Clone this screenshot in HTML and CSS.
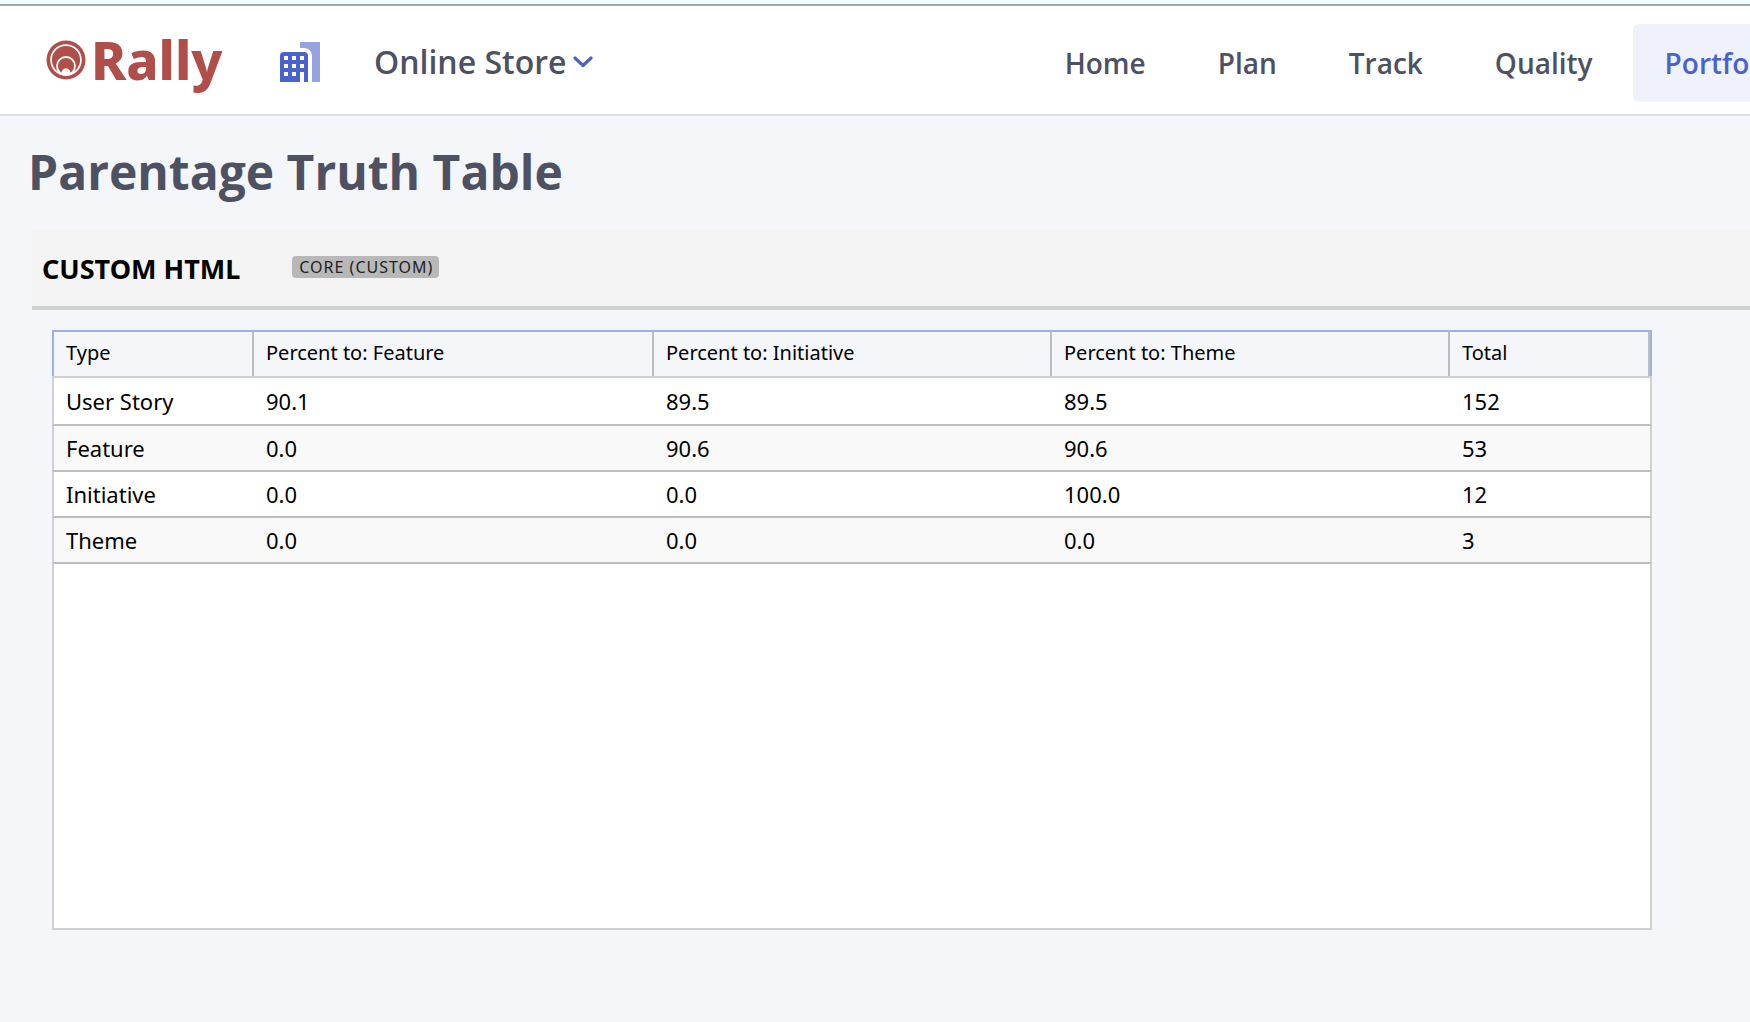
FILE: index.html
```html
<!DOCTYPE html>
<html lang="en">
<head>
<meta charset="utf-8">
<title>Parentage Truth Table</title>
<link rel="stylesheet" href="styles.css">
</head>
<body>
<header class="topbar">
  <a class="logo" href="#" aria-label="Rally">
    <svg class="logo-mark" viewBox="0 0 40 40" aria-hidden="true">
      <circle cx="20" cy="20" r="19.5" fill="#b04e49"/>
      <circle cx="20" cy="20" r="14.9" fill="none" stroke="#fff" stroke-width="1.7"/>
      <circle cx="20" cy="26" r="9" fill="#b04e49" stroke="#fff" stroke-width="1.8"/>
      <path d="M15.600 33.700a4.500 4.500 0 1 1 8.800 0a15 15 0 0 1-8.800 0z" fill="#fff"/>
    </svg>
    <span class="logo-text">Rally</span>
  </a>
  <svg class="building" viewBox="0 0 40 40" aria-hidden="true">
    <path d="M20 0h20v40h-8V14a8 8 0 0 0-8-8h-4z" fill="#96a3df"/>
    <path fill-rule="evenodd" d="M4 10h20a4 4 0 0 1 4 4v26h-4V30h-4v10H0V14a4 4 0 0 1 4-4zM4 14v4h4v-4zM12 14v4h4v-4zM20 14v4h4v-4zM4 22v4h4v-4zM12 22v4h4v-4zM20 22v4h4v-4zM4 30v4h4v-4zM12 30v4h4v-4z" fill="#4a62cb"/>
  </svg>
  <button class="project" type="button">Online Store
    <svg class="chevron" viewBox="0 0 20 12" aria-hidden="true"><path d="M2 2l8 7.500L18 2" fill="none" stroke="#4a62cb" stroke-width="3.200" stroke-linecap="round" stroke-linejoin="round"/></svg>
  </button>
  <nav class="nav">
    <a href="#">Home</a>
    <a href="#">Plan</a>
    <a href="#">Track</a>
    <a href="#">Quality</a>
    <a class="active" href="#">Portfolio</a>
  </nav>
</header>
<main class="page">
  <h1>Parentage Truth Table</h1>
  <section class="panel">
    <div class="panel-head">
      <h2>CUSTOM HTML</h2>
      <span class="badge">CORE (CUSTOM)</span>
    </div>
    <div class="grid">
      <table>
        <colgroup><col class="edge"><col class="feature"><col><col><col class="edge"></colgroup>
        <thead>
          <tr><th>Type</th><th>Percent to: Feature</th><th>Percent to: Initiative</th><th>Percent to: Theme</th><th>Total</th></tr>
        </thead>
        <tbody>
          <tr><td>User Story</td><td>90.1</td><td>89.5</td><td>89.5</td><td>152</td></tr>
          <tr><td>Feature</td><td>0.0</td><td>90.6</td><td>90.6</td><td>53</td></tr>
          <tr><td>Initiative</td><td>0.0</td><td>0.0</td><td>100.0</td><td>12</td></tr>
          <tr><td>Theme</td><td>0.0</td><td>0.0</td><td>0.0</td><td>3</td></tr>
        </tbody>
      </table>
      <div class="grid-empty"></div>
    </div>
  </section>
</main>
</body>
</html>
```
FILE: styles.css
```css
* { box-sizing: border-box; }

body {
  margin: 0;
  min-height: 100vh;
  overflow-x: hidden;
  background: #f4f6fa;
  border-top: 4px solid #f0ffff;
  font-family: "Noto Sans", sans-serif;
  color: #000;
}

.topbar {
  display: flex;
  align-items: center;
  height: 112px;
  padding: 4px 0 0 46px;
  overflow: hidden;
  background: #fff;
  border-top: 2px solid #a0a5a8;
  border-bottom: 2px solid #dcdde9;
}

.logo {
  display: flex;
  align-items: flex-start;
  gap: 5px;
  width: 234px;
  height: 44px;
  color: #b04e49;
  text-decoration: none;
}

.logo-mark { width: 40px; height: 40px; }

.logo-text {
  font-size: 53px;
  font-weight: 800;
  line-height: 40px;
}

.building { width: 40px; height: 40px; flex: none; }

.project {
  display: flex;
  align-items: center;
  gap: 7px;
  margin-left: 54px;
  padding: 0;
  border: 0;
  background: none;
  color: #4d5162;
  font: 600 32px/44px "Open Sans", sans-serif;
  white-space: nowrap;
}

.chevron { width: 20px; height: 12px; }

.nav {
  display: flex;
  gap: 8px;
  margin: 2px -64px 0 auto;
}

.nav a {
  padding: 20px 32px;
  border-radius: 6px;
  color: #4d5162;
  font-family: "Open Sans", sans-serif;
  font-size: 28px;
  font-weight: 600;
  line-height: 38px;
  text-decoration: none;
}

.nav .active { background: #eff2fb; color: #4a62cb; }

h1 {
  margin: 0;
  padding: 24px 28px 26px;
  color: #4d5162;
  font-family: "Open Sans", sans-serif;
  font-size: 48px;
  font-weight: 700;
  line-height: 64px;
}

.panel { margin-left: 32px; }

.panel-head {
  display: flex;
  align-items: flex-start;
  gap: 52px;
  padding: 20px 10px 18px;
  background: #f4f4f4;
  border-bottom: 4px solid #d0d0d0;
}

h2 {
  margin: 0;
  font-size: 27px;
  font-weight: 700;
  line-height: 38px;
}

.badge {
  margin-top: 6px;
  padding: 0 6px 0 7px;
  border-radius: 4px;
  background: #b8b8b8;
  color: #222;
  font-size: 16px;
  letter-spacing: 1px;
  line-height: 22px;
}

.grid {
  display: flex;
  flex-direction: column;
  min-height: 600px;
  margin: 20px 98px 92px 20px;
}

table {
  width: 100%;
  table-layout: fixed;
  border-collapse: separate;
  border-spacing: 0;
}

.edge { width: 202px; }
.feature { width: 400px; }

th, td { padding: 0 12px; text-align: left; }

th {
  height: 46px;
  padding-bottom: 2px;
  border-top: 2px solid #a0b1e0;
  border-right: 2px solid #bdbdbd;
  font-size: 20px;
  font-weight: 400;
  line-height: 42px;
}

th:first-child { border-left: 2px solid #a0b1e0; }

th:last-child {
  border-right-color: #a0b1e0;
  box-shadow: inset -2px 0 0 #bdbdbd;
}

td {
  height: 46px;
  background: #fff;
  border-bottom: 2px solid #bdbdbd;
  font-size: 22px;
  line-height: 44px;
}

tbody tr:nth-child(even) td { background: #f9f9f9; }
tbody tr:first-child td { height: 50px; border-top: 2px solid #d0d0d0; }
td:first-child { border-left: 2px solid #d0d0d0; }
td:last-child { border-right: 2px solid #d0d0d0; }

.grid-empty {
  flex: 1;
  background: #fff;
  border: 2px solid #d0d0d0;
  border-top: 0;
}
```
